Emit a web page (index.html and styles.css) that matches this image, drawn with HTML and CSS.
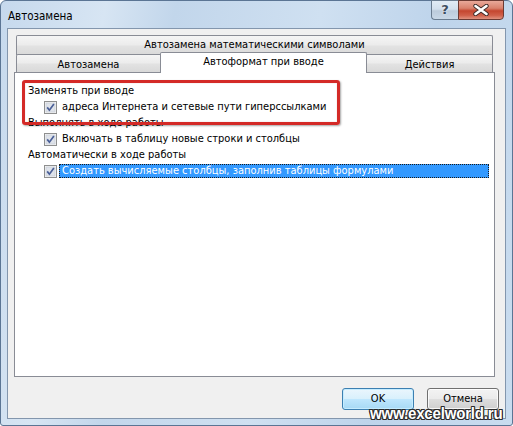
FILE: index.html
```html
<!DOCTYPE html>
<html lang="ru">
<head>
<meta charset="utf-8">
<title>Автозамена</title>
<link rel="stylesheet" href="styles.css">
</head>
<body>
<div class="window">
  <div class="titlebar">
    <span class="title">Автозамена</span>
    <div class="caption-buttons">
      <div class="cap-btn help"><span>?</span></div>
      <div class="cap-btn close">
        <svg width="16" height="12" viewBox="0 0 16 12">
          <path d="M2.5 2 L13.5 10 M13.5 2 L2.5 10" stroke="#3b2a28" stroke-width="4.4" stroke-linecap="round"/>
          <path d="M2.5 2 L13.5 10 M13.5 2 L2.5 10" stroke="#ffffff" stroke-width="2.6" stroke-linecap="round"/>
        </svg>
      </div>
    </div>
  </div>
  <div class="client">
    <div class="tabs">
      <div class="tab-row row1">
        <div class="tab wide">Автозамена математическими символами</div>
      </div>
      <div class="tab-row row2">
        <div class="tab t1">Автозамена</div>
        <div class="tab t2 active">Автоформат при вводе</div>
        <div class="tab t3">Действия</div>
      </div>
      <div class="panel">
        <div class="group-label">Заменять при вводе</div>
        <div class="check">
          <span class="box"><svg width="13" height="13" viewBox="0 0 13 13"><rect x="0.5" y="0.5" width="12" height="12" fill="#f4f4f4" stroke="#8e8f8f"/><rect x="2" y="2" width="9" height="9" fill="#dfe3ea" stroke="#c4cad4" stroke-width="0.6"/><path d="M3.2 6.4 L5.4 9.2 L9.9 2.9" fill="none" stroke="#4a5f97" stroke-width="1.7"/></svg></span>
          <span class="text">адреса Интернета и сетевые пути гиперссылками</span>
        </div>
        <div class="group-label">Выполнять в ходе работы</div>
        <div class="check">
          <span class="box"><svg width="13" height="13" viewBox="0 0 13 13"><rect x="0.5" y="0.5" width="12" height="12" fill="#f4f4f4" stroke="#8e8f8f"/><rect x="2" y="2" width="9" height="9" fill="#dfe3ea" stroke="#c4cad4" stroke-width="0.6"/><path d="M3.2 6.4 L5.4 9.2 L9.9 2.9" fill="none" stroke="#4a5f97" stroke-width="1.7"/></svg></span>
          <span class="text">Включать в таблицу новые строки и столбцы</span>
        </div>
        <div class="group-label">Автоматически в ходе работы</div>
        <div class="check">
          <span class="box"><svg width="13" height="13" viewBox="0 0 13 13"><rect x="0.5" y="0.5" width="12" height="12" fill="#f4f4f4" stroke="#8e8f8f"/><rect x="2" y="2" width="9" height="9" fill="#dfe3ea" stroke="#c4cad4" stroke-width="0.6"/><path d="M3.2 6.4 L5.4 9.2 L9.9 2.9" fill="none" stroke="#4a5f97" stroke-width="1.7"/></svg></span>
          <span class="text selected">Создать вычисляемые столбцы, заполнив таблицы формулами</span>
        </div>
      </div>
    </div>
    <div class="buttons">
      <div class="btn default">OK</div>
      <div class="btn">Отмена</div>
    </div>
  </div>
  <div class="highlight-box"></div>
  <div class="watermark">www.excelworld.ru</div>
</div>
</body>
</html>
```

FILE: styles.css
```css
html, body {
  margin: 0;
  padding: 0;
}
body {
  width: 513px;
  height: 426px;
  overflow: hidden;
  font-family: "DejaVu Sans Condensed", "DejaVu Sans", sans-serif;
  font-size: 11px;
  color: #000;
  background: #ffffff;
}

.window {
  position: relative;
  width: 513px;
  height: 426px;
  box-sizing: border-box;
  border: 1px solid #5b7594;
  border-radius: 6px 6px 3px 3px;
  padding: 0 6px 6px 6px;
  display: flex;
  flex-direction: column;
  background: linear-gradient(100deg, #c6d9ed 0%, #d7e5f3 18%, #c2d6eb 30%, #cfe0f1 55%, #bed4eb 75%, #c9dcef 100%);
}

.titlebar {
  height: 27px;
  display: flex;
  align-items: flex-start;
}
.title {
  margin: 7px 0 0 1px;
  line-height: 16px;
  font-size: 11.5px;
  color: #000;
}
.caption-buttons {
  margin: -1px 2px 0 auto;
  display: flex;
}
.cap-btn {
  height: 20px;
  box-sizing: border-box;
  border: 1px solid #6a7c90;
  display: flex;
  align-items: center;
  justify-content: center;
}
.help {
  width: 27px;
  border-right: none;
  border-radius: 0 0 0 4px;
  background: linear-gradient(#e1ebf5 0%, #d3e0ed 45%, #bccbdb 55%, #c9d8e7 100%);
  font-family: "DejaVu Sans", sans-serif;
  font-weight: bold;
  font-size: 13px;
  color: #3d4d60;
  text-shadow: 0 0 2px #ffffff;
}
.help span {
  margin-top: -1px;
}
.close {
  width: 46px;
  border-radius: 0 0 4px 0;
  border-color: #6b3a33;
  background: linear-gradient(#e9a99a 0%, #d9816d 40%, #c4462f 55%, #d0604a 80%, #e0927f 100%);
}

.client {
  flex: 1;
  background: #f0f0f0;
  border: 1px solid #8396ad;
  padding: 6px 0 0 6px;
  display: flex;
  flex-direction: column;
}

.tabs {
  width: 481px;
  display: flex;
  flex-direction: column;
}
.tab-row {
  display: flex;
  margin: 0 2px;
}
.row1 {
  height: 19px;
}
.row2 {
  height: 18px;
  align-items: flex-start;
}
.tab {
  box-sizing: border-box;
  border: 1px solid #898c95;
  border-bottom: none;
  background: linear-gradient(#f5f5f5 0%, #ececec 45%, #e2e2e2 55%, #d9d9d9 100%);
  text-align: center;
  color: #000;
}
.wide {
  flex: 1;
  height: 20px;
  line-height: 18px;
  border-radius: 2px 2px 0 0;
}
.t1 {
  width: 144px;
  height: 18px;
  line-height: 19px;
  border-right: none;
  border-radius: 2px 0 0 0;
}
.t2 {
  width: 207px;
}
.t3 {
  flex: 1;
  height: 18px;
  line-height: 19px;
  border-left: none;
  border-radius: 0 2px 0 0;
}
.active {
  position: relative;
  z-index: 2;
  height: 21px;
  margin-top: -2px;
  line-height: 17px;
  background: #ffffff;
  border-radius: 2px 2px 0 0;
}

.panel {
  height: 305px;
  box-sizing: border-box;
  border: 1px solid #898c95;
  background: #ffffff;
  padding: 10px 0 0 13px;
}
.group-label {
  height: 16px;
  line-height: 16px;
}
.check {
  height: 16px;
  display: flex;
  align-items: flex-start;
  padding-left: 16px;
}
.box {
  width: 13px;
  height: 13px;
  margin-top: 2px;
  margin-right: 3px;
  display: block;
}
.box svg {
  display: block;
}
.text {
  line-height: 16px;
  padding-left: 2px;
}
.text.selected {
  box-sizing: border-box;
  width: 430px;
  height: 14px;
  margin-top: 1px;
  line-height: 12px;
  padding-left: 2px;
  margin-left: -1px;
  background: #3399ff;
  color: #ffffff;
  border: 1px dotted #1b1b1b;
}

.buttons {
  display: flex;
  justify-content: flex-end;
  gap: 13px;
  margin-top: 11px;
  margin-right: 6px;
}
.btn {
  box-sizing: border-box;
  width: 72px;
  height: 22px;
  border: 1px solid #707070;
  border-radius: 3px;
  background: linear-gradient(#f3f3f3 0%, #ebebeb 48%, #dddddd 52%, #cfcfcf 100%);
  box-shadow: inset 0 0 0 1px rgba(255, 255, 255, 0.8);
  text-align: center;
  line-height: 19px;
  color: #000;
}
.btn.default {
  border-color: #3c7fb1;
  background: linear-gradient(#eaf6fd 0%, #d9f0fc 48%, #bee6fd 52%, #a7d9f5 100%);
  box-shadow: inset 0 0 0 1px #c5ecff;
}

.highlight-box {
  position: absolute;
  left: 21px;
  top: 79px;
  width: 318px;
  height: 45px;
  box-sizing: border-box;
  border: 3px solid #d42a27;
  border-radius: 3px;
  box-shadow: 1px 1px 2px rgba(0, 0, 0, 0.35), inset 0 0 1px rgba(120, 0, 0, 0.4);
}

.watermark {
  position: absolute;
  left: 369px;
  top: 404px;
  font-family: "Liberation Sans", Arial, sans-serif;
  font-weight: bold;
  font-size: 16px;
  letter-spacing: -0.2px;
  line-height: 18px;
  color: #ffffff;
  transform: scaleX(0.94);
  transform-origin: left top;
  text-shadow:
    1px 0 0 #2b2b2b, -1px 0 0 #2b2b2b, 0 1px 0 #2b2b2b, 0 -1px 0 #2b2b2b,
    1px 1px 0 #2b2b2b, -1px -1px 0 #2b2b2b, 1px -1px 0 #2b2b2b, -1px 1px 0 #2b2b2b;
}
```
